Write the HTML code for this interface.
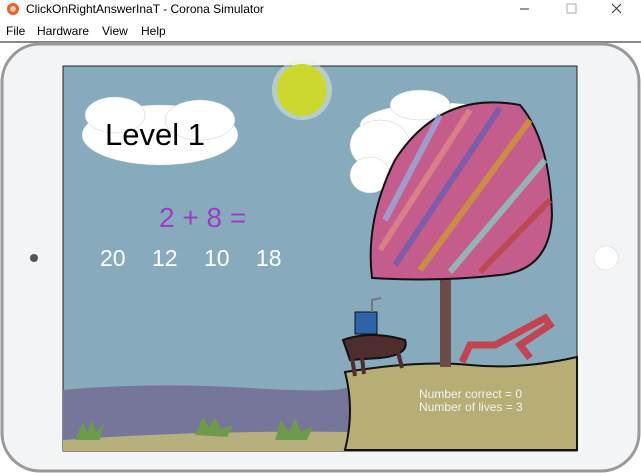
<!DOCTYPE html>
<html><head><meta charset="utf-8"><style>
body{margin:0;width:641px;height:473px;overflow:hidden;background:#fff;font-family:"Liberation Sans",sans-serif;position:relative}
.t{position:absolute;left:26px;top:2px;font-size:12px;color:#000}
.m{position:absolute;top:24px;font-size:12px}
</style></head><body>
<svg width="641" height="473" style="position:absolute;left:0;top:0">
<circle cx="13" cy="9" r="6" fill="#e8602a"/><circle cx="13" cy="9" r="3" fill="#fff" opacity=".6"/>
<line x1="520" y1="9" x2="529" y2="9" stroke="#333"/>
<rect x="567" y="4" width="9" height="9" fill="none" stroke="#aaa"/>
<path d="M612 4l9 9M621 4l-9 9" stroke="#333"/>
<rect x="0" y="41" width="641" height="2" fill="#888"/>
<rect x="2" y="44" width="637" height="427" rx="38" fill="#f3f4f6" stroke="#999" stroke-width="3"/>
<circle cx="34" cy="258" r="4" fill="#555"/>
<circle cx="606" cy="258" r="12" fill="#fff" stroke="#e6e6e6"/>
<rect x="63" y="66" width="514" height="385" fill="#87abbd" stroke="#222"/>
<circle cx="302" cy="90" r="30" fill="#e6efe0" opacity=".5"/>
<ellipse cx="302" cy="90" rx="25" ry="26" fill="#ccd82e"/>
<g fill="#fff" stroke="#ccc" stroke-width="0.5">
<ellipse cx="160" cy="135" rx="78" ry="30"/><ellipse cx="115" cy="115" rx="30" ry="18"/><ellipse cx="200" cy="120" rx="35" ry="20"/>
<ellipse cx="440" cy="125" rx="80" ry="22"/><ellipse cx="380" cy="145" rx="30" ry="25"/><ellipse cx="370" cy="175" rx="20" ry="18"/><ellipse cx="420" cy="105" rx="30" ry="15"/>
</g>
<path d="M63 390 Q150 382 250 388 T350 385 L350 440 L63 440Z" fill="#76759a"/>
<path d="M63 440 Q200 430 350 432 L350 451 L63 451Z" fill="#b8b07c"/>
<path d="M345 372 Q420 360 470 365 T577 357 L577 450 L345 450 Q355 410 345 372Z" fill="#b6ae74" stroke="#111" stroke-width="2"/>
<rect x="440" y="270" width="11" height="97" fill="#6b4a48"/>
<path d="M372 278 Q365 220 395 160 Q440 90 520 105 Q550 140 552 215 Q550 270 500 275 Q440 282 372 278Z" fill="#c55d8c" stroke="#111" stroke-width="2"/>
<g stroke-width="6" opacity=".8" fill="none">
<path d="M380 250 L470 110" stroke="#d88"/><path d="M395 265 L500 108" stroke="#6a5fb0"/><path d="M420 270 L530 120" stroke="#c93"/><path d="M450 272 L545 160" stroke="#8cb"/><path d="M480 272 L550 200" stroke="#b44"/><path d="M385 220 L440 115" stroke="#9ad"/></g>
<path d="M343 340 Q370 330 405 340 Q410 355 380 358 L350 360Z" fill="#4e2e2c" stroke="#111" stroke-width="2"/>
<path d="M352 358 L355 376M362 358 L364 374M398 352 L402 368" stroke="#4e2e2c" stroke-width="4"/>
<rect x="355" y="312" width="22" height="22" fill="#2d64a8" stroke="#111"/>
<path d="M372 312 L372 300 L381 298" stroke="#777" fill="none" stroke-width="2"/>
<path d="M462 362 L470 345 L495 345 L545 318 L550 325 L520 345 L530 358" fill="none" stroke="#c34350" stroke-width="7"/>
<g fill="#6e9a4c"><path d="M75 440 l8-18 4 10 5-12 4 12 8-8 -4 16z"/><path d="M195 435 l8-18 6 10 6-10 6 12 12-4 -6 12z"/><path d="M275 440 l6-20 8 12 6-14 6 14 12-6 -6 14z"/></g>
</svg>
<div class="t">ClickOnRightAnswerInaT - Corona Simulator</div>
<div class="m" style="left:6px">File</div><div class="m" style="left:37px">Hardware</div><div class="m" style="left:102px">View</div><div class="m" style="left:141px">Help</div>
<div style="position:absolute;left:105px;top:117px;font-size:31px;color:#000">Level 1</div>
<div style="position:absolute;left:159px;top:202px;font-size:28px;color:#9a3fc5">2 + 8 =</div>
<div style="position:absolute;left:100px;top:245px;font-size:23px;color:#fff;word-spacing:20px;white-space:pre">20 12 10 18</div>
<div style="position:absolute;left:419px;top:388px;font-size:12px;color:#f2f2f2;line-height:13px">Number correct = 0<br>Number of lives = 3</div>
</body></html>
